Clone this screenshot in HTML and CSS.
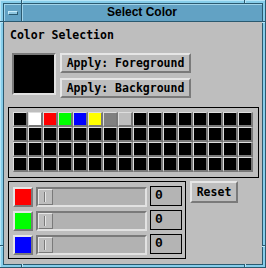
FILE: index.html
```html
<!DOCTYPE html>
<html lang="en">
  <head>
    <meta charset="UTF-8" />
    <title>Select Color</title>
    <link rel="stylesheet" href="styles.css">
  </head>

  <body>
    <div class="window">
      <span class="notch notch-top notch-a"></span>
      <span class="notch notch-top notch-b"></span>
      <span class="notch notch-bottom notch-a"></span>
      <span class="notch notch-bottom notch-b"></span>
      <span class="notch notch-left notch-c"></span>
      <span class="notch notch-left notch-d"></span>
      <span class="notch notch-right notch-c"></span>
      <span class="notch notch-right notch-d"></span>

      <div class="frame">
        <div class="titlebar">
          <div class="menu-btn"><span class="menu-bar"></span></div>
          <div class="title">Select Color</div>
        </div>

        <div class="client">
          <div class="heading">Color Selection</div>

          <div class="current">
            <div class="swatch"></div>
            <div class="apply">
              <button class="btn">Apply: Foreground</button>
              <button class="btn">Apply: Background</button>
            </div>
          </div>

          <div class="palette">
            <div class="grid">
              <span class="cell"></span><span class="cell white"></span><span class="cell red"></span><span class="cell green"></span>
              <span class="cell blue"></span><span class="cell yellow"></span><span class="cell gray"></span><span class="cell silver"></span>
              <span class="cell"></span><span class="cell"></span><span class="cell"></span><span class="cell"></span>
              <span class="cell"></span><span class="cell"></span><span class="cell"></span><span class="cell"></span>

              <span class="cell"></span><span class="cell"></span><span class="cell"></span><span class="cell"></span>
              <span class="cell"></span><span class="cell"></span><span class="cell"></span><span class="cell"></span>
              <span class="cell"></span><span class="cell"></span><span class="cell"></span><span class="cell"></span>
              <span class="cell"></span><span class="cell"></span><span class="cell"></span><span class="cell"></span>

              <span class="cell"></span><span class="cell"></span><span class="cell"></span><span class="cell"></span>
              <span class="cell"></span><span class="cell"></span><span class="cell"></span><span class="cell"></span>
              <span class="cell"></span><span class="cell"></span><span class="cell"></span><span class="cell"></span>
              <span class="cell"></span><span class="cell"></span><span class="cell"></span><span class="cell"></span>

              <span class="cell"></span><span class="cell"></span><span class="cell"></span><span class="cell"></span>
              <span class="cell"></span><span class="cell"></span><span class="cell"></span><span class="cell"></span>
              <span class="cell"></span><span class="cell"></span><span class="cell"></span><span class="cell"></span>
              <span class="cell"></span><span class="cell"></span><span class="cell"></span><span class="cell"></span>
            </div>
          </div>

          <div class="lower">
            <div class="mixer">
              <div class="channel">
                <div class="chip red"></div>
                <div class="slider"><div class="thumb"></div></div>
                <div class="value">0</div>
              </div>
              <div class="channel">
                <div class="chip green"></div>
                <div class="slider"><div class="thumb"></div></div>
                <div class="value">0</div>
              </div>
              <div class="channel">
                <div class="chip blue"></div>
                <div class="slider"><div class="thumb"></div></div>
                <div class="value">0</div>
              </div>
            </div>
            <button class="btn reset">Reset</button>
          </div>
        </div>
      </div>
    </div>
  </body>
</html>
```

FILE: styles.css
```css
html,
body {
  margin: 0;
  padding: 0;
}

body {
  width: 266px;
  height: 268px;
  overflow: hidden;
  background: #bebebe;
}

/* window manager frame */
.window {
  position: relative;
  box-sizing: border-box;
  width: 266px;
  height: 268px;
  padding: 3px 2px 2px 3px;
  display: flex;
  background: #86cdea;
  border-right: 1px solid #2b5a70;
  border-bottom: 1px solid #2b5a70;
  box-shadow: inset 1px 1px 0 #b6e5f7;
}

.notch {
  position: absolute;
  background: #2b5a70;
}
.notch-top,
.notch-bottom {
  width: 1px;
  height: 3px;
  box-shadow: 1px 0 0 #b6e5f7;
}
.notch-top {
  top: 0;
}
.notch-bottom {
  bottom: 0;
}
.notch-a {
  left: 21px;
}
.notch-b {
  left: 244px;
}
.notch-left,
.notch-right {
  width: 3px;
  height: 1px;
  box-shadow: 0 1px 0 #b6e5f7;
}
.notch-left {
  left: 0;
}
.notch-right {
  right: 0;
}
.notch-c {
  top: 21px;
}
.notch-d {
  top: 245px;
}

.frame {
  flex: 1;
  display: flex;
  flex-flow: column;
  border: 1px solid #2b5a70;
  background: #bebebe;
}

.titlebar {
  box-sizing: border-box;
  height: 18px;
  display: flex;
  border-bottom: 1px solid #2b5a70;
}

.menu-btn {
  box-sizing: border-box;
  width: 18px;
  border-right: 1px solid #2b5a70;
  background: #62a2c4;
  box-shadow: inset 1px 1px 0 #a2d4ea;
  display: flex;
  align-items: center;
  justify-content: center;
}

.menu-bar {
  box-sizing: border-box;
  width: 10px;
  height: 4px;
  background: #8ec6e0;
  border-top: 1px solid #c8ecfa;
  border-left: 1px solid #c8ecfa;
  border-bottom: 1px solid #2b5a70;
  border-right: 1px solid #2b5a70;
}

.title {
  flex: 1;
  background: #62a2c4;
  box-shadow: inset 1px 1px 0 #a2d4ea;
  text-align: center;
  font: bold 12px/17px "Liberation Sans", Arial, sans-serif;
  color: #000;
}

/* dialog body */
.client {
  flex: 1;
  display: flex;
  flex-flow: column;
  font: bold 11.5px/14px "DejaVu Sans Mono", monospace;
  color: #000;
}

.heading {
  margin: 6px 0 0 6px;
  height: 14px;
}

.current {
  display: flex;
  margin: 11px 0 0 8px;
}

.swatch {
  box-sizing: border-box;
  width: 44px;
  height: 42px;
  background: #000;
  border: 2px solid;
  border-color: #7a7a7a #e2e2e2 #e2e2e2 #7a7a7a;
}

.apply {
  display: flex;
  flex-flow: column;
  gap: 5px;
  margin-left: 4px;
}

.btn {
  box-sizing: border-box;
  margin: 0;
  padding: 0;
  height: 20px;
  border: 2px solid;
  border-color: #e6e6e6 #7a7a7a #7a7a7a #e6e6e6;
  background: #bebebe;
  font: inherit;
  color: inherit;
  text-align: center;
  -webkit-appearance: none;
  appearance: none;
}

.apply .btn {
  width: 131px;
}

.palette {
  box-sizing: border-box;
  width: 251px;
  height: 71px;
  margin: 9px 0 0 4px;
  padding: 4px 5px 5px 4px;
  border: 1px solid #000;
}

.grid {
  display: grid;
  grid-template-columns: repeat(16, 15px);
  grid-auto-rows: 15px;
}

.cell {
  box-sizing: border-box;
  background: #000;
  border-style: solid;
  border-width: 1px 2px 2px 1px;
  border-color: #dedede #787878 #787878 #dedede;
}

.white {
  background: #fff;
}
.red {
  background: #ff0000;
}
.green {
  background: #00ff00;
}
.blue {
  background: #0000ff;
}
.yellow {
  background: #ffff00;
}
.gray {
  background: #808080;
}
.silver {
  background: #bebebe;
}

.lower {
  display: flex;
  align-items: flex-start;
  margin: 3px 0 0 4px;
}

.mixer {
  box-sizing: border-box;
  width: 178px;
  display: flex;
  flex-flow: column;
  gap: 4px;
  padding: 5px 3px 3px 4px;
  border: 1px solid #000;
}

.channel {
  display: flex;
  gap: 3px;
  height: 20px;
}

.chip {
  box-sizing: border-box;
  width: 20px;
  border: 2px solid;
  border-color: #e6e6e6 #7a7a7a #7a7a7a #e6e6e6;
}

.slider {
  box-sizing: border-box;
  width: 111px;
  padding: 0 1px 0 0;
  background: #b2b2b2;
  border: 2px solid;
  border-color: #7a7a7a #e2e2e2 #e2e2e2 #7a7a7a;
}

.thumb {
  position: relative;
  box-sizing: border-box;
  width: 15px;
  height: 100%;
  background: #bebebe;
  border: 1px solid;
  border-color: #e6e6e6 #7a7a7a #7a7a7a #e6e6e6;
}

.thumb::after {
  content: "";
  position: absolute;
  left: 5px;
  top: 2px;
  bottom: 2px;
  width: 1px;
  background: #7a7a7a;
  box-shadow: 1px 0 0 #e6e6e6;
}

.value {
  box-sizing: border-box;
  width: 32px;
  margin-top: -1px;
  height: 20px;
  padding-left: 4px;
  border: 1px solid #000;
  background: #b4b4b4;
  font: bold 13px/18px "Liberation Mono", monospace;
}

.reset {
  width: 48px;
  height: 22px;
  margin-left: 4px;
}
```
